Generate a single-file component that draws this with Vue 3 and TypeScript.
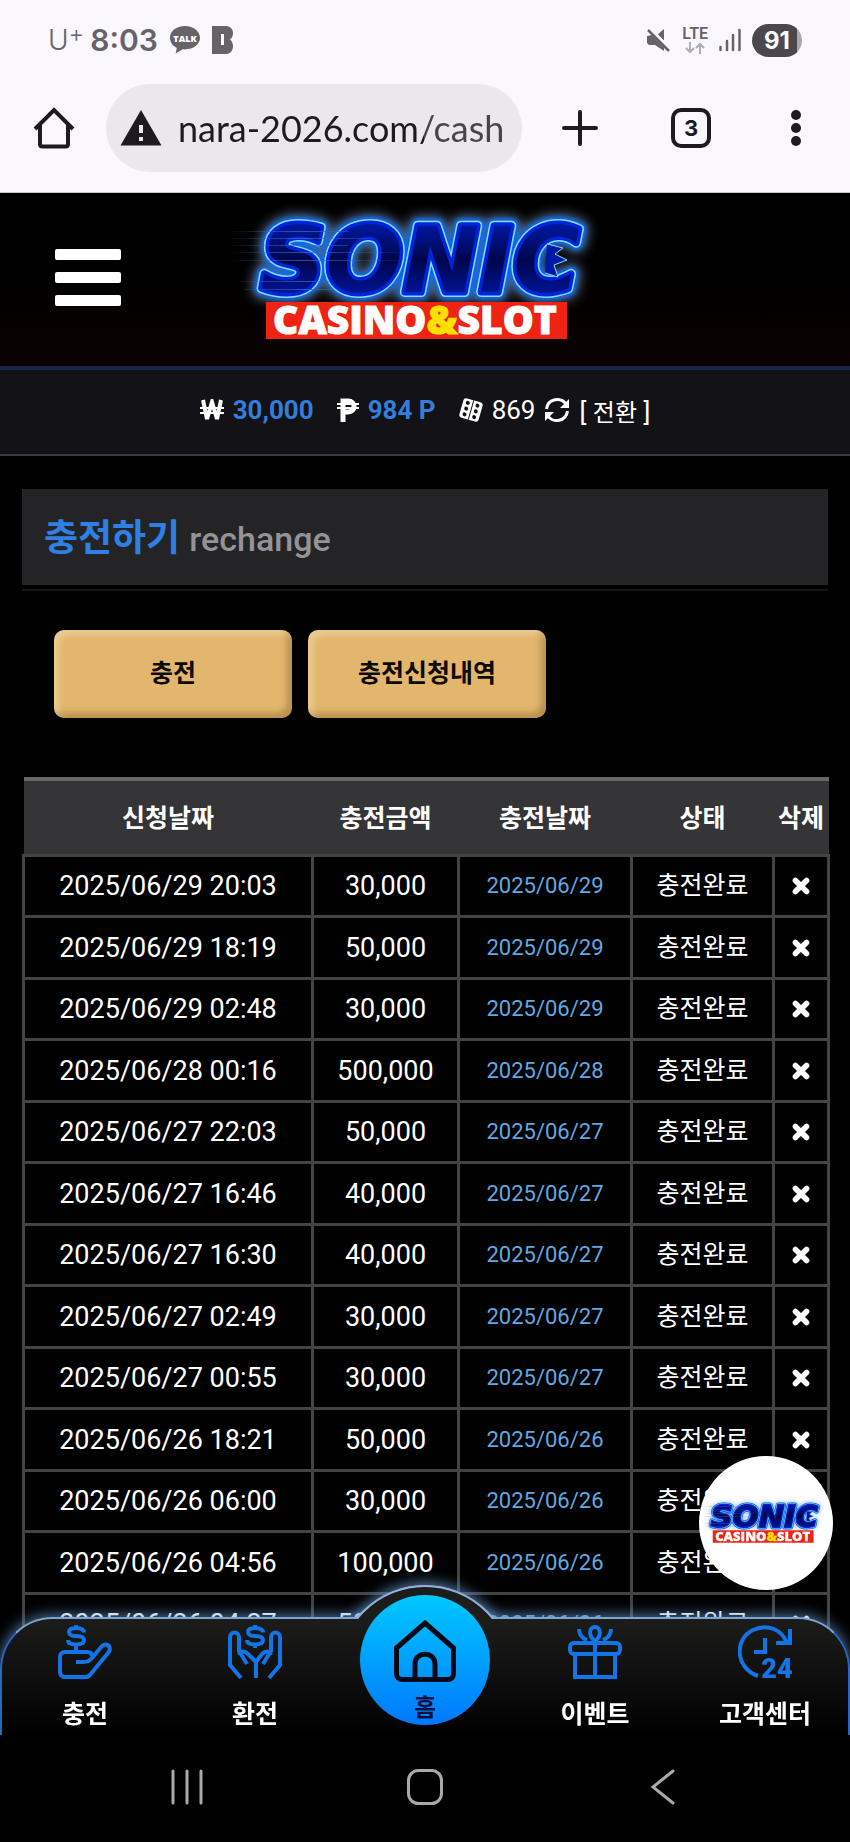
<script setup lang="ts">
import { ref } from 'vue'

interface ChargeRow {
  requested: string
  amount: string
  charged: string
  status: string
}

const url = ref('nara-2026.com/cash')

const makeRow = (requested: string, amount: string): ChargeRow => ({
  requested,
  amount,
  charged: requested.split(' ')[0],
  status: '충전완료',
})

const rows = ref<ChargeRow[]>([
  makeRow('2025/06/29 20:03', '30,000'),
  makeRow('2025/06/29 18:19', '50,000'),
  makeRow('2025/06/29 02:48', '30,000'),
  makeRow('2025/06/28 00:16', '500,000'),
  makeRow('2025/06/27 22:03', '50,000'),
  makeRow('2025/06/27 16:46', '40,000'),
  makeRow('2025/06/27 16:30', '40,000'),
  makeRow('2025/06/27 02:49', '30,000'),
  makeRow('2025/06/27 00:55', '30,000'),
  makeRow('2025/06/26 18:21', '50,000'),
  makeRow('2025/06/26 06:00', '30,000'),
  makeRow('2025/06/26 04:56', '100,000'),
  makeRow('2025/06/26 04:27', '500,000'),
])

const removeRow = (row: ChargeRow) => {
  rows.value = rows.value.filter((r) => r !== row)
}
</script>

<template>
  <div class="screen">
    <div class="browser">
      <div class="status">
        <div class="status-side">
          <span class="carrier">U<sup>+</sup></span>
          <span class="clock">8:03</span>
          <svg class="talk" width="30" height="28" viewBox="0 0 30 28" aria-hidden="true">
            <path fill="#666469" d="M15 0C6.500 0 0 5 0 11.800c0 4.400 2.600 8 6.800 10.200L5.700 27.500l7-4.200c.8.1 1.500.1 2.300.1 8.500 0 15-5 15-11.600S23.500 0 15 0z" />
            <text x="15" y="16" text-anchor="middle" font-family="Open Sans, sans-serif" font-weight="800" font-size="9" fill="#fff">TALK</text>
          </svg>
          <svg width="22" height="28" viewBox="0 0 22 28" aria-hidden="true">
            <path fill="#666469" d="M0 0h14c4 0 7 3 7 7 0 3-1 5-3 6.500 2 1.500 3 4 3 6.500 0 5-3 8-7 8H0z" />
            <path fill="#fff" d="M9 8h3v11H9z" />
          </svg>
        </div>
        <div class="status-side right">
          <svg width="24" height="24" viewBox="0 0 24 24" aria-hidden="true">
            <path fill="#666469" d="M10 7l7-6v12zM0 8v7l2 2h6l9 6v-5L5 7z" />
            <path d="M2 1l21 21" stroke="#faf8fd" stroke-width="5" />
            <path d="M1 2l21 21" stroke="#666469" stroke-width="2.500" />
          </svg>
          <div class="lte">
            <span>LTE</span>
            <svg width="20" height="12" viewBox="0 0 20 12" fill="none" stroke="#b0aeb3" stroke-width="2" aria-hidden="true">
              <path d="M5 0v10M1 6l4 4 4-4M15 12V2M11 6l4-4 4 4" />
            </svg>
          </div>
          <svg class="signal" width="22" height="24" viewBox="0 0 22 24" stroke="#666469" stroke-width="2.500" stroke-linecap="round" aria-hidden="true">
            <path d="M1.500 19v3M8 13v9M14 7v15M20.500 2v20" />
          </svg>
          <span class="battery">91</span>
        </div>
      </div>

      <div class="toolbar">
        <button type="button" aria-label="홈페이지">
          <svg width="42" height="42" viewBox="0 0 42 42" fill="none" stroke="#1d1b20" stroke-width="4" aria-hidden="true">
            <path d="M2 22L21 3l19 19M7 18v19c0 1.500 1 2.500 2.500 2.500h23c1.500 0 2.500-1 2.500-2.500V18" />
          </svg>
        </button>
        <label class="address">
          <svg width="42" height="36" viewBox="0 0 42 36" aria-hidden="true">
            <path fill="#1d1b20" d="M21 0l20.500 35.500H.5z" />
            <path fill="#ebe8ed" d="M19 15h4v8h-4zM19 27h4v4h-4z" />
          </svg>
          <input v-model="url" type="text" aria-label="주소" />
        </label>
        <button type="button" aria-label="새 탭">
          <svg width="36" height="36" viewBox="0 0 36 36" stroke="#1d1b20" stroke-width="4" stroke-linecap="round" aria-hidden="true">
            <path d="M18 2v32M2 18h32" />
          </svg>
        </button>
        <button type="button" class="tabs" aria-label="탭 3개">3</button>
        <button type="button" aria-label="메뉴">
          <svg width="14" height="38" viewBox="0 0 14 38" fill="#1d1b20" aria-hidden="true">
            <circle cx="7" cy="6" r="5" /><circle cx="7" cy="19" r="5" /><circle cx="7" cy="32" r="5" />
          </svg>
        </button>
      </div>
    </div>

    <header class="site-head">
      <button type="button" class="menu" aria-label="전체 메뉴">
        <span></span><span></span><span></span>
      </button>
      <a href="#" class="brand" aria-label="SONIC CASINO&SLOT">
        <svg width="400" height="160" viewBox="5 0 400 160">
          <defs>
            <filter id="glow-wide" x="-20%" y="-40%" width="140%" height="180%"><feGaussianBlur stdDeviation="6" /></filter>
            <filter id="glow-core" x="-20%" y="-40%" width="140%" height="180%"><feGaussianBlur stdDeviation="2" /></filter>
            <linearGradient id="streak" x1="0" x2="1"><stop offset="0" stop-color="#3c62b8" stop-opacity="0" /><stop offset=".4" stop-color="#3c62b8" stop-opacity=".8" /><stop offset="1" stop-color="#3c62b8" stop-opacity="0" /></linearGradient>
            <linearGradient id="ink" x1="0" y1="0" x2="0" y2="1"><stop offset="0" stop-color="#0020c8" /><stop offset=".5" stop-color="#00064c" /><stop offset="1" stop-color="#001cc0" /></linearGradient>
            <g id="logo" font-family="DejaVu Sans, sans-serif">
              <g font-size="91" font-weight="700" font-style="italic" stroke-linejoin="round">
                <text x="200" y="92" text-anchor="middle" fill="#8aa8d8" stroke="#8aa8d8" stroke-width="20" opacity=".6" filter="url(#glow-wide)">SONIC</text>
                <text x="200" y="92" text-anchor="middle" fill="#0a66e8" stroke="#0a66e8" stroke-width="15" filter="url(#glow-core)">SONIC</text>
                <text x="200" y="92" text-anchor="middle" fill="#7fe0ff" stroke="#7fe0ff" stroke-width="10">SONIC</text>
                <text x="200" y="92" text-anchor="middle" fill="#0026dc" stroke="#0026dc" stroke-width="7">SONIC</text>
                <text x="200" y="92" text-anchor="middle" fill="url(#ink)">SONIC</text>
              </g>
              <path fill="#0018a8" stroke="#7fe0ff" stroke-width="1" d="M327 44l16 4-8 6 12 6-13 5 4 12-13-4" />
              <g fill="url(#streak)">
                <path d="M8 31h120v1H8zM12 38h140v1H12zM8 45h120v1H8zM6 52h190v1H6zM10 60h170v1H10zM20 81h90v1H20zM24 89h90v1H24z" />
              </g>
              <path fill="#ee2313" d="M46 102h301v37H46z" />
              <text x="195" y="134" text-anchor="middle" font-family="Open Sans, sans-serif" font-weight="800" font-size="39" fill="#fff" stroke="#fff" stroke-width="1">CASINO<tspan fill="#ffe100" stroke="#ffe100">&amp;</tspan>SLOT</text>
            </g>
          </defs>
          <use href="#logo" />
        </svg>
      </a>
    </header>

    <div class="wallet">
      <span class="money">
        <svg width="24" height="22" viewBox="0 0 24 22" fill="none" stroke="#fff" aria-hidden="true">
          <path stroke-width="4" d="M3 1l4 19 5-17 5 17 4-19" /><path stroke-width="2" d="M0 9h24M0 14h24" />
        </svg>
        <b>30,000</b>
      </span>
      <span class="money">
        <svg width="22" height="24" viewBox="0 0 22 24" fill="none" stroke="#fff" aria-hidden="true">
          <path stroke-width="5" d="M6 24V3h5c8 0 8 11 0 11H6" /><path stroke-width="2" d="M0 6h22M0 10h22" />
        </svg>
        <b>984 P</b>
      </span>
      <span class="slot">
        <svg width="24" height="24" viewBox="0 0 24 24" aria-hidden="true">
          <g transform="rotate(16 12 12)">
            <rect x="2" y="2" width="20" height="20" rx="3" fill="#fff" />
            <path d="M12 2v20" stroke="#131216" />
            <g fill="#131216"><circle cx="7" cy="6" r="2" /><circle cx="7" cy="12" r="2" /><circle cx="7" cy="18" r="2" /><circle cx="17" cy="6" r="2" /><circle cx="17" cy="12" r="2" /><circle cx="17" cy="18" r="2" /></g>
          </g>
        </svg>
        <span>869</span>
        <svg width="26" height="24" viewBox="0 0 26 24" aria-hidden="true">
          <path fill="none" stroke="#fff" stroke-width="3" d="M2.500 11C4 0 17-1 22 6M23.500 13C22 24 9 25 4 18" />
          <path fill="#fff" d="M25 1v9h-9zM1 23v-9h9z" />
        </svg>
        <a href="#">[ <span>전환</span> ]</a>
      </span>
    </div>

    <main>
      <div class="title">
        <h1>충전하기 <small>rechange</small></h1>
      </div>

      <div class="actions">
        <button type="button">충전</button>
        <button type="button">충전신청내역</button>
      </div>

      <table>
        <colgroup>
          <col class="c-requested" /><col class="c-amount" /><col class="c-charged" /><col class="c-status" /><col class="c-delete" />
        </colgroup>
        <thead>
          <tr>
            <th scope="col">신청날짜</th>
            <th scope="col">충전금액</th>
            <th scope="col">충전날짜</th>
            <th scope="col">상태</th>
            <th scope="col">삭제</th>
          </tr>
        </thead>
        <tbody>
          <tr v-for="row in rows" :key="row.requested">
            <td>{{ row.requested }}</td>
            <td>{{ row.amount }}</td>
            <td class="charged">{{ row.charged }}</td>
            <td class="state">{{ row.status }}</td>
            <td>
              <button type="button" aria-label="삭제" @click="removeRow(row)">
                <svg width="20" height="20" viewBox="0 0 18 18" stroke="#fff" stroke-width="5" stroke-linecap="round" aria-hidden="true"><path d="M4 4l10 10M14 4L4 14" /></svg>
              </button>
            </td>
          </tr>
        </tbody>
      </table>
    </main>

    <a href="#" class="floating" aria-label="SONIC CASINO&SLOT">
      <svg width="134" height="54" viewBox="5 0 400 160"><use href="#logo" /></svg>
    </a>

    <div class="dock">
      <nav class="tabbar">
        <div class="bulge"></div>
        <div class="panel"></div>
        <div class="bulge-fill"></div>
        <a href="#" class="tab">
          <svg width="54" height="54" viewBox="0 0 54 54" aria-hidden="true">
            <path d="M34 31c0-3-2-4-5-4H7c-3 0-5 2-5 5v15c0 3 2 5 5 5h22c1 0 2-1 3-2l18-22c2-2 2-5 1-7s-5-2-7 0L34 33c-2 3-5 4-9 4h-7M18 22v5" />
            <path d="M26 7.500c0-3-3-4.500-8-4.500s-7 1.500-7 4 3 4 7 4 8 1 8 4-3 4.500-8 4.500-8-1.500-8-4.500M18 0v3M18 19v4" />
          </svg>
          <span>충전</span>
        </a>
        <a href="#" class="tab">
          <svg width="54" height="54" viewBox="0 0 54 54" aria-hidden="true">
            <path d="M13 53L2 40V12c0-6 9-6 9 0v14l8 13M11 30c2-5 6-4 9-1l9 9M41 53l11-13V12c0-6-9-6-9 0v14l-8 13M43 30c-2-5-6-4-9-1l-6 8v16" />
            <path d="M35 7.500c0-3-3-4.500-8-4.500s-7 1.500-7 4 3 4 7 4 8 1 8 4-3 4.500-8 4.500-8-1.500-8-4.500M27 0v3M27 19v4" />
          </svg>
          <span>환전</span>
        </a>
        <div class="tab">
          <a href="#" class="home">
            <svg width="62" height="62" viewBox="0 0 62 62" aria-hidden="true">
              <path d="M2.500 28L31 3l28.500 25v26c0 3-2.500 5.500-5.500 5.500H8c-3 0-5.500-2.500-5.500-5.500zM21 59V44c0-13 20-13 20 0v15" />
            </svg>
            <span>홈</span>
          </a>
        </div>
        <a href="#" class="tab">
          <svg width="54" height="54" viewBox="0 0 54 54" aria-hidden="true">
            <path d="M7 29v23h40V29M27 18v34" />
            <rect x="2" y="18" width="50" height="11" rx="4" />
            <path d="M27 16c-7-5-6-14 0-14s7 9 0 14M11 4c0 6 3 9 8 11M43 4c0 6-3 9-8 11" />
          </svg>
          <span>이벤트</span>
        </a>
        <a href="#" class="tab">
          <svg width="54" height="54" viewBox="0 0 54 54" aria-hidden="true">
            <path d="M20 51C-3 43-4 14 15 5c15-7 29 0 34 13M52 4v14H38M27 13v14H16" />
            <text x="39" y="53" text-anchor="middle" font-family="Roboto, sans-serif" font-weight="900" font-size="27">24</text>
          </svg>
          <span>고객센터</span>
        </a>
      </nav>

      <div class="system">
        <button type="button" aria-label="최근 앱">
          <svg width="36" height="36" viewBox="0 0 36 36" aria-hidden="true"><path d="M4 2v32M18 2v32M32 2v32" /></svg>
        </button>
        <button type="button" aria-label="홈 화면">
          <svg width="36" height="36" viewBox="0 0 36 36" aria-hidden="true"><rect x="1.500" y="1.500" width="33" height="33" rx="10" /></svg>
        </button>
        <button type="button" aria-label="뒤로">
          <svg width="36" height="36" viewBox="0 0 36 36" aria-hidden="true"><path d="M28 2L8 18l20 16" /></svg>
        </button>
      </div>
    </div>
  </div>
</template>

<style>
body {
  background: #000;
}
</style>

<style scoped>
.screen {
  min-height: 100vh;
  box-sizing: border-box;
  padding-bottom: 160px;
  background: #000;
  color: #fff;
  font-family: Roboto, 'Noto Sans CJK KR', sans-serif;
  font-size: 26px;
}
button {
  padding: 0;
  border: 0;
  background: none;
  font: inherit;
  color: inherit;
}
a {
  color: inherit;
  text-decoration: none;
}
svg {
  display: block;
  flex: none;
}

/* browser chrome */
.browser {
  background: #faf8fd;
  border-bottom: 1px solid #c9c8cc;
  color: #666469;
}
.status {
  display: flex;
  justify-content: space-between;
  align-items: center;
  height: 80px;
  padding: 0 48px;
}
.status-side {
  display: flex;
  align-items: center;
  gap: 12px;
}
.status-side.right {
  gap: 11px;
}
.carrier {
  margin-right: -6px;
  font: 300 28px/32px Inter, sans-serif;
}
.carrier sup {
  font-size: 24px;
  line-height: 0;
  vertical-align: 8px;
}
.clock {
  font: 600 30px/32px Inter, sans-serif;
}
.talk {
  overflow: visible;
}
.lte {
  display: flex;
  flex-direction: column;
  align-items: center;
  font: 600 16px/16px Roboto, sans-serif;
}
.battery {
  width: 50px;
  border-radius: 17px;
  background: linear-gradient(90deg, #4a484d 45px, #a9a7ac 45px);
  color: #fff;
  font: 700 24px/33px Inter, sans-serif;
  text-align: center;
}
.toolbar {
  display: flex;
  align-items: center;
  height: 112px;
  padding: 0 47px 16px 33px;
  box-sizing: border-box;
}
.address {
  flex: 1;
  display: flex;
  align-items: center;
  gap: 16px;
  min-width: 0;
  height: 88px;
  margin: 0 40px 0 31px;
  padding: 0 17px 0 14px;
  box-sizing: border-box;
  border-radius: 44px;
  background: #ebe8ed;
}
.address input {
  flex: 1;
  min-width: 0;
  padding: 0;
  border: 0;
  outline: 0;
  background: none;
  color: #1d1b20;
  font: 400 36px/44px Lato, sans-serif;
  mask-image: linear-gradient(90deg, #000 246px, rgba(0, 0, 0, 0.8) 246px);
}
.tabs {
  width: 40px;
  height: 40px;
  margin: 0 78px 0 73px;
  border: 4px solid #1d1b20;
  border-radius: 10px;
  color: #1d1b20;
  font: 700 22px/32px Inter, sans-serif;
}

/* site header */
.site-head {
  position: relative;
  display: flex;
  align-items: center;
  justify-content: center;
  height: 173px;
  border-bottom: 4px solid #1b2347;
  background: linear-gradient(#000 40%, #0a0101);
}
.menu {
  position: absolute;
  left: 55px;
  top: 56px;
  display: flex;
  flex-direction: column;
  gap: 12px;
}
.menu span {
  width: 66px;
  height: 11px;
  border-radius: 2px;
  background: #fff;
}
.wallet {
  display: flex;
  align-items: center;
  justify-content: center;
  gap: 23px;
  height: 86px;
  padding-bottom: 4px;
  box-sizing: border-box;
  border-bottom: 2px solid #3b3a3d;
  background: #131216;
}
.money,
.slot {
  display: flex;
  align-items: center;
  gap: 9px;
}
.money b {
  color: #347edb;
  font-weight: 700;
}
.slot a span {
  font-size: 24px;
}

/* page content */
main {
  padding: 33px 22px 0;
}
.title {
  padding: 25px 22px 21px;
  background: #242326;
  box-shadow: 0 4px 0 #000, 0 6px 0 #151515;
}
h1 {
  margin: 0;
  color: #2f80e4;
  font-size: 37px;
  font-weight: 700;
  line-height: 49px;
}
h1 small {
  color: #949397;
  font-size: 34px;
  font-weight: 500;
}
.actions {
  display: flex;
  gap: 16px;
  padding: 45px 32px 59px;
}
.actions button {
  width: 238px;
  height: 88px;
  padding-bottom: 6px;
  border-radius: 10px;
  background: #e2b66d;
  box-shadow: inset 5px 5px 6px rgba(255, 240, 210, 0.35), inset -5px -5px 6px rgba(90, 60, 10, 0.3);
  color: #0c0806;
  font-size: 25px;
  font-weight: 700;
}

/* history table */
table {
  width: 100%;
  table-layout: fixed;
  border-collapse: collapse;
}
.c-requested { width: 289px; }
.c-amount { width: 146px; }
.c-charged { width: 173px; }
.c-status { width: 142px; }
.c-delete { width: 55px; }
th {
  height: 69px;
  padding: 0 0 4px;
  border-top: 4px solid #666568;
  background: #353437;
  font-size: 25px;
  font-weight: 700;
}
td {
  height: 58px;
  padding: 0;
  border: 3px solid #434245;
  font-size: 27px;
  line-height: 30px;
  text-align: center;
}
tbody tr:nth-child(even) td {
  height: 59px;
}
td.charged {
  color: #62a8e2;
  font-size: 22px;
}
td.state {
  font-size: 25px;
}
td button {
  display: block;
  margin: 0 auto;
}

/* overlays */
.floating {
  position: fixed;
  right: 17px;
  bottom: 252px;
  display: flex;
  align-items: center;
  justify-content: center;
  width: 134px;
  height: 134px;
  border-radius: 50%;
  background: #fff;
  overflow: hidden;
}
.dock {
  position: fixed;
  left: 0;
  right: 0;
  bottom: 0;
}
.tabbar {
  position: relative;
  display: grid;
  grid-template-columns: repeat(5, 1fr);
  height: 118px;
}
.panel {
  position: absolute;
  inset: 0;
  border: 2px solid #2a68c0;
  border-top-color: #7ea4d0;
  border-bottom: 0;
  border-radius: 52px 52px 0 0;
  background: linear-gradient(#1c1c1b, #0c0c0c 60%, #000);
  box-shadow: 0 -2px 14px rgba(110, 160, 220, 0.7);
}
.bulge,
.bulge-fill {
  position: absolute;
  left: 50%;
  top: -32px;
  width: 176px;
  height: 176px;
  margin-left: -88px;
  box-sizing: border-box;
  border: 2px solid #8fb0dc;
  border-radius: 50%;
}
.bulge {
  box-shadow: 0 -2px 14px rgba(110, 160, 220, 0.8);
}
.bulge-fill {
  background: #1c1c1b;
  clip-path: inset(0 0 142px 0);
}
.tab {
  position: relative;
  display: flex;
  flex-direction: column;
  align-items: center;
  padding-top: 8px;
  font-size: 25px;
  font-weight: 700;
}
.tab > svg {
  fill: none;
  stroke: #1274e6;
  stroke-width: 4;
}
.tab > svg text {
  fill: #1274e6;
  stroke: none;
}
.tab > span {
  margin-top: 18px;
  line-height: 36px;
}
.home {
  position: absolute;
  top: -22px;
  display: flex;
  flex-direction: column;
  align-items: center;
  width: 130px;
  height: 130px;
  padding-top: 25px;
  box-sizing: border-box;
  border-radius: 50%;
  background: linear-gradient(#00c8ff, #0078ff);
  color: #04103a;
  font-size: 24px;
  line-height: 36px;
}
.home svg {
  fill: none;
  stroke: #000a14;
  stroke-width: 5;
}
.home span {
  margin-top: 8px;
}
.system {
  position: relative;
  display: grid;
  grid-template-columns: repeat(3, 1fr);
  align-items: center;
  justify-items: center;
  height: 107px;
  padding: 0 68px 4px;
  box-sizing: border-box;
  background: #000;
}
.system svg {
  width: 36px;
  height: 36px;
  fill: none;
  stroke: #a9a9ab;
  stroke-width: 3;
  stroke-linecap: round;
}
</style>
